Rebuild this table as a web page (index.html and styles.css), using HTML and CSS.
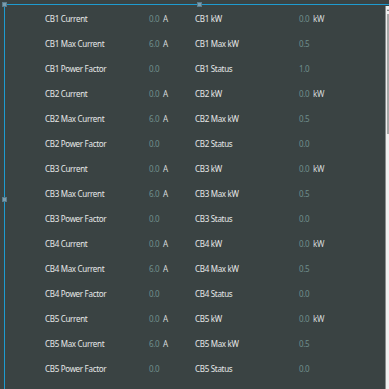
FILE: index.html
```html
<!DOCTYPE html>
<html lang="en">
<head>
    <meta charset="UTF-8">
    <title>Breaker Readings</title>
    <link rel="stylesheet" href="styles.css">
</head>
<body>

    <div class="frame">
        <span class="handle handle-tl"></span>
        <span class="handle handle-tm"></span>
        <span class="handle handle-ml"></span>

        <div class="readings">
            <div class="row">
                <span class="label">CB1 Current</span><span class="value">0.0</span><span class="unit">A</span>
                <span class="label">CB1 kW</span><span class="value">0.0</span><span class="unit">kW</span>
            </div>
            <div class="row">
                <span class="label">CB1 Max Current</span><span class="value">6.0</span><span class="unit">A</span>
                <span class="label">CB1 Max kW</span><span class="value">0.5</span><span class="unit"></span>
            </div>
            <div class="row">
                <span class="label">CB1 Power Factor</span><span class="value">0.0</span><span class="unit"></span>
                <span class="label">CB1 Status</span><span class="value">1.0</span><span class="unit"></span>
            </div>

            <div class="row">
                <span class="label">CB2 Current</span><span class="value">0.0</span><span class="unit">A</span>
                <span class="label">CB2 kW</span><span class="value">0.0</span><span class="unit">kW</span>
            </div>
            <div class="row">
                <span class="label">CB2 Max Current</span><span class="value">6.0</span><span class="unit">A</span>
                <span class="label">CB2 Max kW</span><span class="value">0.5</span><span class="unit"></span>
            </div>
            <div class="row">
                <span class="label">CB2 Power Factor</span><span class="value">0.0</span><span class="unit"></span>
                <span class="label">CB2 Status</span><span class="value">0.0</span><span class="unit"></span>
            </div>

            <div class="row">
                <span class="label">CB3 Current</span><span class="value">0.0</span><span class="unit">A</span>
                <span class="label">CB3 kW</span><span class="value">0.0</span><span class="unit">kW</span>
            </div>
            <div class="row">
                <span class="label">CB3 Max Current</span><span class="value">6.0</span><span class="unit">A</span>
                <span class="label">CB3 Max kW</span><span class="value">0.5</span><span class="unit"></span>
            </div>
            <div class="row">
                <span class="label">CB3 Power Factor</span><span class="value">0.0</span><span class="unit"></span>
                <span class="label">CB3 Status</span><span class="value">0.0</span><span class="unit"></span>
            </div>

            <div class="row">
                <span class="label">CB4 Current</span><span class="value">0.0</span><span class="unit">A</span>
                <span class="label">CB4 kW</span><span class="value">0.0</span><span class="unit">kW</span>
            </div>
            <div class="row">
                <span class="label">CB4 Max Current</span><span class="value">6.0</span><span class="unit">A</span>
                <span class="label">CB4 Max kW</span><span class="value">0.5</span><span class="unit"></span>
            </div>
            <div class="row">
                <span class="label">CB4 Power Factor</span><span class="value">0.0</span><span class="unit"></span>
                <span class="label">CB4 Status</span><span class="value">0.0</span><span class="unit"></span>
            </div>

            <div class="row">
                <span class="label">CB5 Current</span><span class="value">0.0</span><span class="unit">A</span>
                <span class="label">CB5 kW</span><span class="value">0.0</span><span class="unit">kW</span>
            </div>
            <div class="row">
                <span class="label">CB5 Max Current</span><span class="value">6.0</span><span class="unit">A</span>
                <span class="label">CB5 Max kW</span><span class="value">0.5</span><span class="unit"></span>
            </div>
            <div class="row">
                <span class="label">CB5 Power Factor</span><span class="value">0.0</span><span class="unit"></span>
                <span class="label">CB5 Status</span><span class="value">0.0</span><span class="unit"></span>
            </div>
        </div>

        <div class="scrollbar">
            <span class="scroll-arrow"></span>
            <span class="scroll-thumb"></span>
        </div>
    </div>

</body>
</html>
```

FILE: styles.css
```css
/* Basic reset */
* {
    margin: 0;
    padding: 0;
    box-sizing: border-box;
}

body {
    font-family: 'Noto Sans', 'Open Sans', sans-serif;
    font-size: 8px;
    letter-spacing: -0.3px;
    background-color: #3a4343;
    height: 389px;
    overflow: hidden;
}

/* Selected panel outline */
.frame {
    position: relative;
    display: flex;
    height: 385px;
    margin: 4px 0 0 4px;
    border-top: 1px solid #1e9bd0;
    border-left: 1px solid #1e9bd0;
}

.handle {
    position: absolute;
    width: 5px;
    height: 5px;
    background-color: #7c9cac;
    border: 1px solid #5a7d8d;
}

.handle-tl { top: -3px; left: -3px; }
.handle-tm { top: -3px; left: 192px; }
.handle-ml { top: 192px; left: -3px; }

/* Readings table */
.readings {
    flex: 1;
    padding: 1px 0 0 40px;
}

.row {
    display: grid;
    grid-template-columns: 104px 14px 32px 104px 14px 32px;
    align-items: center;
    height: 25px;
}

.label {
    color: #e6e8e8;
}

.value {
    color: #6f8e8c;
}

.unit {
    color: #d8dcdc;
}

/* Scrollbar on the right */
.scrollbar {
    display: flex;
    flex-direction: column;
    align-items: center;
    width: 4px;
    margin-top: 1px;
    background-color: #f0f0f0;
    border-left: 1px solid #8a8f8f;
}

.scroll-arrow {
    width: 0;
    height: 0;
    margin-top: 3px;
    border-left: 1px solid transparent;
    border-right: 1px solid transparent;
    border-bottom: 2px solid #606060;
}

.scroll-thumb {
    width: 2px;
    height: 120px;
    margin-top: 3px;
    background-color: #a8a8a8;
}
```
